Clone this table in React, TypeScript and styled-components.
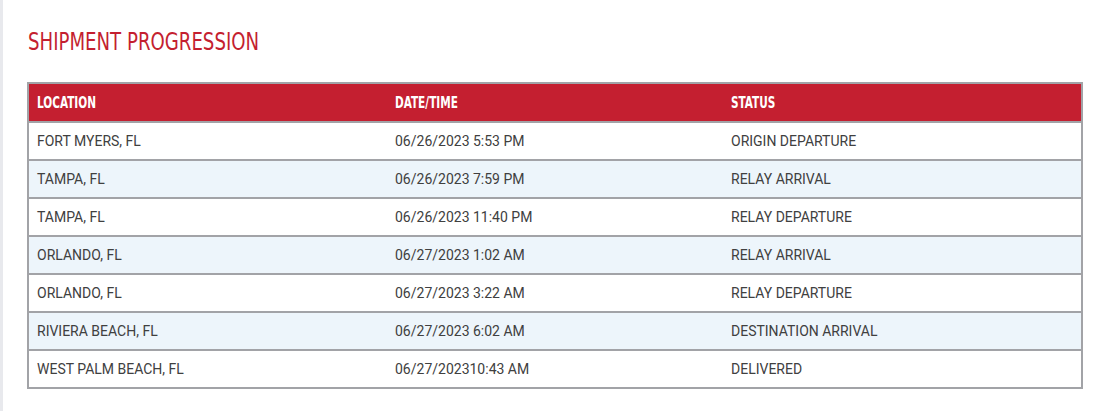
import styled, { createGlobalStyle } from 'styled-components'

const GlobalStyle = createGlobalStyle`
  html, body {
    margin: 0;
    padding: 0;
    background: #ffffff;
  }
`

const Page = styled.div`
  min-height: 411px;
  box-sizing: border-box;
  border-left: 3px solid #e8e9ed;
  padding: 28px 23px 0 24px;
`

const Title = styled.h2`
  display: inline-block;
  margin: 0 0 26px 1px;
  font-family: 'DejaVu Sans Condensed', 'Roboto', sans-serif;
  font-weight: 400;
  font-size: 24px;
  line-height: 28px;
  color: #c41f30;
  transform: scaleX(0.84);
  transform-origin: left center;
  white-space: nowrap;
`

const Table = styled.table`
  width: 1054px;
  border-collapse: collapse;
  border: 2px solid #a2a3a7;
  table-layout: fixed;
`

const HeadCell = styled.th`
  height: 37px;
  padding: 0 8px;
  text-align: left;
  background: #c41f30;
  border-bottom: 2px solid #a2a3a7;
`

const HeadLabel = styled.span`
  display: inline-block;
  color: #ffffff;
  font-family: 'DejaVu Sans Condensed', 'Roboto', sans-serif;
  font-weight: 700;
  font-size: 16px;
  transform: scaleX(0.73);
  transform-origin: left center;
  white-space: nowrap;
`

const Row = styled.tr<{ $alt: boolean }>`
  background: ${(p) => (p.$alt ? '#edf5fb' : '#ffffff')};
  border-bottom: 2px solid #a2a3a7;
`

const Cell = styled.td`
  height: 36px;
  padding: 0 8px;
  font-family: 'Roboto', 'Liberation Sans', sans-serif;
  font-size: 14px;
  color: #404040;
  white-space: nowrap;
`

const rows = [
  ['FORT MYERS, FL', '06/26/2023 5:53 PM', 'ORIGIN DEPARTURE'],
  ['TAMPA, FL', '06/26/2023 7:59 PM', 'RELAY ARRIVAL'],
  ['TAMPA, FL', '06/26/2023 11:40 PM', 'RELAY DEPARTURE'],
  ['ORLANDO, FL', '06/27/2023 1:02 AM', 'RELAY ARRIVAL'],
  ['ORLANDO, FL', '06/27/2023 3:22 AM', 'RELAY DEPARTURE'],
  ['RIVIERA BEACH, FL', '06/27/2023 6:02 AM', 'DESTINATION ARRIVAL'],
  ['WEST PALM BEACH, FL', '06/27/202310:43 AM', 'DELIVERED'],
]

export default function App() {
  return (
    <>
      <GlobalStyle />
      <Page>
        <div>
          <Title>SHIPMENT PROGRESSION</Title>
        </div>
        <Table>
          <colgroup>
            <col style={{ width: 359 }} />
            <col style={{ width: 336 }} />
            <col style={{ width: 359 }} />
          </colgroup>
          <thead>
            <tr>
              <HeadCell>
                <HeadLabel>LOCATION</HeadLabel>
              </HeadCell>
              <HeadCell>
                <HeadLabel>DATE/TIME</HeadLabel>
              </HeadCell>
              <HeadCell>
                <HeadLabel>STATUS</HeadLabel>
              </HeadCell>
            </tr>
          </thead>
          <tbody>
            {rows.map((r, i) => (
              <Row key={i} $alt={i % 2 === 1}>
                <Cell>{r[0]}</Cell>
                <Cell>{r[1]}</Cell>
                <Cell>{r[2]}</Cell>
              </Row>
            ))}
          </tbody>
        </Table>
      </Page>
    </>
  )
}
